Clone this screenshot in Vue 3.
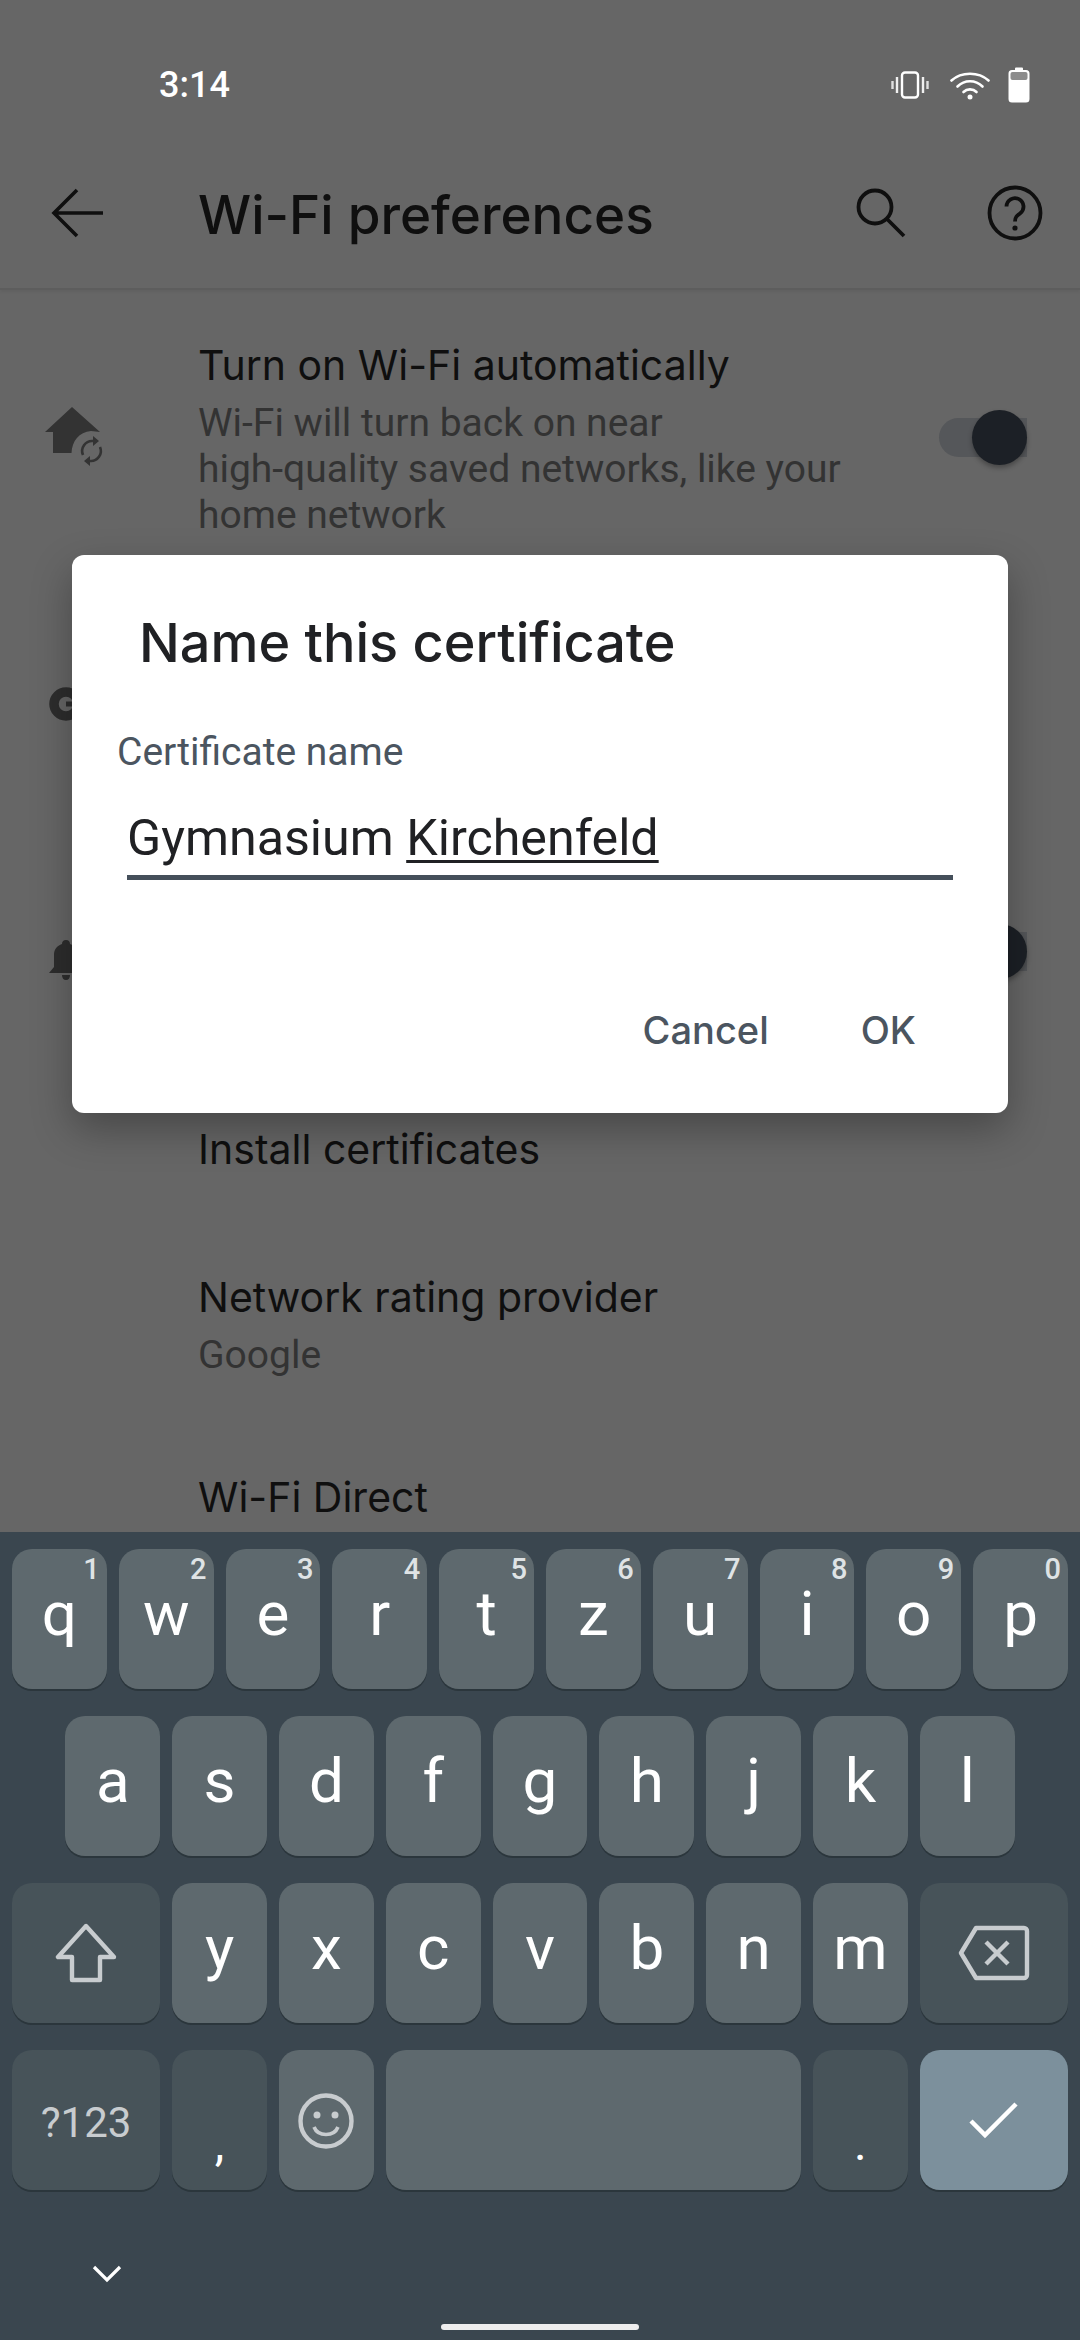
<template>
  <div class="screen">
    <div class="page">
      <div class="status-bar">
        <span class="clock">3:14</span>
        <div class="status-icons">
          <svg class="ic-vibrate" width="38" height="28" viewBox="0 0 38 28">
            <rect x="11" y="1.5" width="16" height="25" rx="3" fill="none" stroke="#fff" stroke-width="2.4" />
            <path d="M6 6v16M32 6v16" stroke="#fff" stroke-width="2.4" opacity=".9" />
            <path d="M1.5 10v8M36.5 10v8" stroke="#fff" stroke-width="2.4" opacity=".8" />
          </svg>
          <svg class="ic-wifi" width="40" height="30" viewBox="0 0 40 30">
            <path d="M1.5 10.5C11.5 1.5 28.5 1.5 38.5 10.5" fill="none" stroke="#fff" stroke-width="2.6" stroke-linecap="round" />
            <path d="M7.5 16.5C14.5 9.5 25.5 9.5 32.5 16.5" fill="none" stroke="#fff" stroke-width="2.6" stroke-linecap="round" />
            <path d="M13.5 22C17 18.5 23 18.5 26.5 22" fill="none" stroke="#fff" stroke-width="2.6" stroke-linecap="round" />
            <circle cx="20" cy="27" r="2.5" fill="#fff" />
          </svg>
          <svg class="ic-battery" width="22" height="36" viewBox="0 0 22 36">
            <path d="M7 3V1.5a1 1 0 0 1 1-1h6a1 1 0 0 1 1 1V3h3a3.500 3.500 0 0 1 3.500 3.500V32a3.500 3.500 0 0 1-3.500 3.500H4A3.500 3.500 0 0 1 .5 32V6.500A3.500 3.500 0 0 1 4 3z" fill="#fff" />
            <rect x="2.500" y="5" width="17" height="8" rx="2" fill="#8c8c8c" />
          </svg>
        </div>
      </div>

      <div class="toolbar">
        <svg class="tool-back" width="54" height="50" viewBox="0 0 54 50">
          <path d="M52 25H3M26 2L3 25l23 23" fill="none" stroke="#0f0f0f" stroke-width="3.600" />
        </svg>
        <span class="tool-title">Wi-Fi preferences</span>
        <svg class="tool-search" width="50" height="50" viewBox="0 0 50 50">
          <circle cx="19" cy="19" r="16.500" fill="none" stroke="#0f0f0f" stroke-width="3.800" />
          <path d="M31 31l17 17" stroke="#0f0f0f" stroke-width="3.800" />
        </svg>
        <svg class="tool-help" width="56" height="56" viewBox="0 0 56 56">
          <circle cx="28" cy="28" r="25.500" fill="none" stroke="#0f0f0f" stroke-width="3.800" />
          <path d="M19.500 21.500a8.500 8.500 0 1 1 13.500 7c-3 2.200-5 3.500-5 8" fill="none" stroke="#0f0f0f" stroke-width="3.800" />
          <circle cx="28" cy="43" r="2.600" fill="#0f0f0f" />
        </svg>
      </div>

      <div class="list">
        <div class="row row-first">
          <div class="row-icon">
            <svg width="62" height="64" viewBox="0 0 62 64">
              <path d="M29 2L2 27h8v21h18.500C29 36 36 27 48 26l9 1z" fill="#333" />
              <path d="M40 50A10 10 0 0 1 50 36M57 42A10 10 0 0 1 47 56" fill="none" stroke="#333" stroke-width="2.600" />
              <path d="M50 31l6 5-6 5zM47 51l-6 5 6 5z" fill="#333" />
            </svg>
          </div>
          <div class="row-text">
            <div class="row-title">Turn on Wi-Fi automatically</div>
            <div class="row-sub">Wi-Fi will turn back on near<br />high-quality saved networks, like your<br />home network</div>
          </div>
          <div class="toggle"><span class="knob"></span></div>
        </div>

        <div class="row row-second">
          <div class="row-icon">
            <svg class="side-icon" width="34" height="34" viewBox="0 0 34 34">
              <circle cx="17" cy="17" r="12" fill="none" stroke="#2d2d2d" stroke-width="9.500" />
              <rect x="17" y="14.500" width="17" height="5" fill="#2d2d2d" />
            </svg>
          </div>
        </div>

        <div class="row row-third">
          <div class="row-icon">
            <svg class="side-icon bell" width="34" height="40" viewBox="0 0 34 40">
              <path d="M17 0c-2.500 0-4 1.500-4 4C8 6 5 9 5 15v12l-5 6h34l-5-6V15c0-6-3-9-8-11 0-2.500-1.500-4-4-4z" fill="#2d2d2d" />
              <path d="M13 35h8c0 3-1.500 5-4 5s-4-2-4-5z" fill="#2d2d2d" />
            </svg>
          </div>
          <div class="row-text"></div>
          <div class="toggle"><span class="knob"></span></div>
        </div>

        <div class="row row-single">
          <div class="row-icon"></div>
          <div class="row-text"><div class="row-title">Install certificates</div></div>
        </div>

        <div class="row row-double">
          <div class="row-icon"></div>
          <div class="row-text">
            <div class="row-title">Network rating provider</div>
            <div class="row-sub">Google</div>
          </div>
        </div>

        <div class="row row-single">
          <div class="row-icon"></div>
          <div class="row-text"><div class="row-title">Wi-Fi Direct</div></div>
        </div>
      </div>

      <div class="dialog">
        <div class="dialog-title">Name this certificate</div>
        <div class="field-label">Certificate name</div>
        <div class="field-input">Gymnasium <span class="composing">Kirchenfeld</span></div>
        <div class="dialog-actions">
          <span class="action">Cancel</span>
          <span class="action">OK</span>
        </div>
      </div>
    </div>

    <div class="keyboard">
      <div v-for="(row, r) in rows" :key="r" class="key-row">
        <div
          v-for="k in row"
          :key="k.id"
          class="key"
          :class="[k.kind, 'span-' + (k.span || 2), { 'start-2': k.offset }]"
        >
          <span v-if="k.hint" class="hint">{{ k.hint }}</span>
          <template v-if="k.label">{{ k.label }}</template>

          <svg v-if="k.id === 'shift'" width="62" height="60" viewBox="0 0 62 60">
            <path d="M31 3L3 34h14v23h28V34h14z" fill="none" stroke="#c8cccf" stroke-width="4.400" stroke-linejoin="round" />
          </svg>
          <svg v-if="k.id === 'del'" width="72" height="56" viewBox="0 0 72 56">
            <path d="M18 3h48a3 3 0 0 1 3 3v44a3 3 0 0 1-3 3H18L3 28z" fill="none" stroke="#c8cccf" stroke-width="4.400" stroke-linejoin="round" />
            <path d="M28 17l22 22M50 17L28 39" stroke="#c8cccf" stroke-width="4.400" />
          </svg>
          <svg v-if="k.id === 'emoji'" class="emoji-icon" width="56" height="60" viewBox="0 0 56 60">
            <circle cx="28" cy="30" r="25.500" fill="none" stroke="#c8cccf" stroke-width="4.400" />
            <circle cx="19" cy="24" r="3.500" fill="#c8cccf" />
            <circle cx="37" cy="24" r="3.500" fill="#c8cccf" />
            <path d="M16 36c4 10 20 10 24 0" fill="none" stroke="#c8cccf" stroke-width="3.600" />
          </svg>
          <svg v-if="k.id === 'ok'" width="50" height="38" viewBox="0 0 50 38">
            <path d="M2 20l14 14L47 3" fill="none" stroke="#fff" stroke-width="4.500" />
          </svg>
        </div>
      </div>
      <div class="kb-bottom">
        <svg class="kb-hide" width="30" height="18" viewBox="0 0 30 18">
          <path d="M2 2l13 13L28 2" fill="none" stroke="#fff" stroke-width="3.200" />
        </svg>
        <span class="nav-handle"></span>
      </div>
    </div>
  </div>
</template>

<script setup>
const hints = ['1', '2', '3', '4', '5', '6', '7', '8', '9', '0']

const rows = [
  'qwertzuiop'.split('').map((c, i) => ({ id: c, label: c, kind: 'letter', hint: hints[i] })),
  'asdfghjkl'.split('').map((c, i) => ({ id: c, label: c, kind: 'letter', offset: i === 0 })),
  [
    { id: 'shift', kind: 'dark', span: 3 },
    ...'yxcvbnm'.split('').map(c => ({ id: c, label: c, kind: 'letter' })),
    { id: 'del', kind: 'dark', span: 3 }
  ],
  [
    { id: 'sym', label: '?123', kind: 'dark sym', span: 3 },
    { id: 'comma', label: ',', kind: 'dark punct' },
    { id: 'emoji', kind: 'letter' },
    { id: 'space', kind: 'letter', span: 8 },
    { id: 'period', label: '.', kind: 'dark punct' },
    { id: 'ok', kind: 'enter', span: 3 }
  ]
]
</script>

<style>
html, body {
  margin: 0;
  background: #666;
}
</style>

<style scoped>
.screen {
  width: 1080px;
  height: 2340px;
  display: flex;
  flex-direction: column;
  overflow: hidden;
  font-family: Roboto, "Liberation Sans", sans-serif;
}

.page {
  position: relative;
  height: 1532px;
  overflow: hidden;
  background: #666;
}

.status-bar {
  height: 168px;
  box-sizing: border-box;
  padding: 61px 50px 0 159px;
  display: flex;
  justify-content: space-between;
  align-items: flex-start;
  color: #fff;
}

.clock {
  font-size: 36px;
  font-weight: 500;
  line-height: 48px;
}

.status-icons {
  display: flex;
  align-items: center;
  height: 48px;
}

.ic-vibrate { margin-right: 21px; }
.ic-wifi { margin-right: 18px; }

.toolbar {
  height: 122px;
  box-sizing: border-box;
  padding-bottom: 30px;
  display: flex;
  align-items: center;
  border-bottom: 2px solid #5d5d5d;
  box-shadow: 0 2px 3px rgba(0, 0, 0, 0.06);
}

.tool-back { margin-left: 51px; }

.tool-title {
  margin: 4px 0 0 93px;
  font-family: Inter, sans-serif;
  font-size: 53px;
  font-weight: 500;
  color: #0f0f0f;
  flex: 1;
}

.tool-search { margin-right: 81px; }
.tool-help { margin-right: 37px; }

.list {
  display: flex;
  flex-direction: column;
}

.row {
  display: flex;
  align-items: center;
  box-sizing: border-box;
}

.row-first { height: 294px; }
.row-second { height: 234px; padding-top: 6px; }
.row-third { height: 258px; padding-top: 8px; }
.row-single { height: 146px; }
.row-double { height: 202px; }

.row-icon {
  width: 148px;
  margin-right: 50px;
  display: flex;
  justify-content: center;
  flex-shrink: 0;
}

.row-text { flex: 1; }

.row-title {
  font-family: Inter, sans-serif;
  font-size: 41px;
  line-height: 56px;
  color: #0f0f0f;
}

.row-first .row-title,
.row-double .row-title {
  margin-bottom: 7px;
}

.row-sub {
  font-size: 39px;
  line-height: 46px;
  color: #333;
}

.side-icon { margin-right: 16px; }
.bell { margin-top: 18px; }

.toggle {
  position: relative;
  width: 88px;
  height: 39px;
  margin-right: 53px;
  border-radius: 20px 0 0 20px;
  background: #55575a;
}

.knob {
  position: absolute;
  right: 0;
  top: -8px;
  width: 55px;
  height: 55px;
  border-radius: 50%;
  background: #1c2026;
  box-shadow: 0 3px 5px rgba(0, 0, 0, 0.3);
}

.dialog {
  position: absolute;
  left: 72px;
  top: 555px;
  width: 936px;
  height: 558px;
  box-sizing: border-box;
  background: #fff;
  border-radius: 12px;
  box-shadow: 0 16px 40px rgba(0, 0, 0, 0.3);
}

.dialog-title {
  margin: 52px 0 0 67px;
  font-family: Inter, sans-serif;
  font-size: 54px;
  font-weight: 500;
  line-height: 72px;
  color: #202124;
}

.field-label {
  margin: 51px 0 0 45px;
  font-size: 39px;
  line-height: 44px;
  color: #4b5560;
}

.field-input {
  margin: 34px 55px 0 55px;
  height: 67px;
  border-bottom: 5px solid #454f5a;
  font-size: 50.200px;
  line-height: 60px;
  color: #202124;
}

.composing {
  text-decoration: underline;
  text-decoration-thickness: 3px;
  text-underline-offset: 5px;
}

.dialog-actions {
  display: flex;
  justify-content: flex-end;
  gap: 92px;
  margin: 124px 92px 0 0;
}

.action {
  font-family: Inter, sans-serif;
  font-size: 38px;
  font-weight: 500;
  line-height: 52px;
  color: #4b5560;
}

.keyboard {
  height: 808px;
  background: #3a464f;
  box-sizing: border-box;
  padding: 17px 12px 0;
  display: flex;
  flex-direction: column;
  gap: 27px;
}

.key-row {
  display: grid;
  grid-template-columns: repeat(20, 1fr);
  column-gap: 12px;
  height: 140px;
}

.key {
  position: relative;
  display: flex;
  align-items: center;
  justify-content: center;
  border-radius: 20px;
  box-shadow: 0 2px 0 #2b363c;
  color: #fff;
}

.span-2 { grid-column: span 2; }
.span-3 { grid-column: span 3; }
.span-8 { grid-column: span 8; }
.start-2 { grid-column: 2 / span 2; }

.letter {
  background: #5e696e;
  font-size: 62px;
  padding-bottom: 12px;
  box-sizing: border-box;
}

.emoji-icon { margin-top: 14px; }

.dark { background: #475359; }
.enter { background: #7c909c; }

.sym {
  font-size: 42px;
  padding-top: 5px;
  box-sizing: border-box;
  color: #c8cccf;
}

.punct {
  align-items: flex-end;
  font-size: 48px;
  padding-bottom: 18px;
  box-sizing: border-box;
}

.hint {
  position: absolute;
  top: 3px;
  right: 7px;
  font-size: 29px;
  font-weight: 500;
  line-height: 34px;
  color: #dfe3e5;
}

.kb-bottom {
  position: relative;
  flex: 1;
}

.kb-hide {
  position: absolute;
  left: 80px;
  top: 48px;
}

.nav-handle {
  position: absolute;
  left: 429px;
  top: 107px;
  width: 198px;
  height: 6px;
  border-radius: 3px;
  background: #eee;
}
</style>
